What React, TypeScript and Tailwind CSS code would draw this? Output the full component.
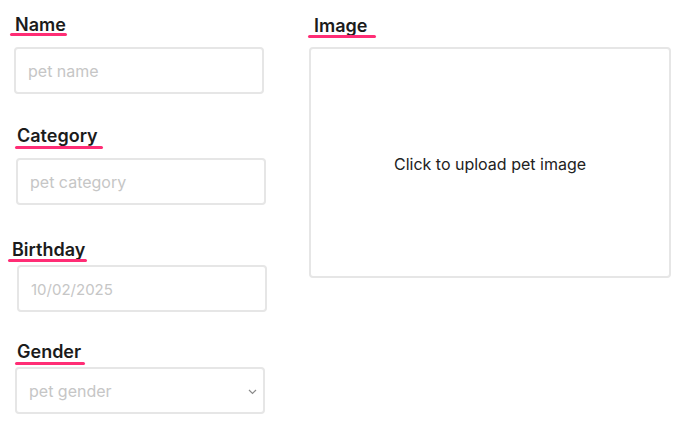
import React from "react";

function Label({ text, cls, lineCls }: { text: string; cls: string; lineCls: string }) {
  return (
    <>
      <div className={"text-[18px] leading-[20px] font-semibold text-[#1b1b1b] " + cls}>{text}</div>
      <div className={"h-[3px] rounded-full bg-[#ff2d75] " + lineCls} />
    </>
  );
}

export default function App() {
  return (
    <div className="w-[687px] h-[445px] bg-white font-['Inter',sans-serif] flex overflow-hidden">
      <div className="w-[300px] flex flex-col">
        <Label text="Name" cls="mt-[15px] ml-[15px]" lineCls="-mt-[2px] ml-[10px] w-[57px]" />
        <input
          placeholder="pet name"
          className="mt-[11px] ml-[14px] w-[250px] h-[47px] border-2 border-[#e6e6e6] rounded-[4px] px-[12px] pt-[1px] text-[16px] text-[#222] placeholder:text-[#c6c6c6] outline-none"
        />

        <Label text="Category" cls="mt-[32px] ml-[17px]" lineCls="mt-0 ml-[15px] w-[88px]" />
        <input
          placeholder="pet category"
          className="mt-[9px] ml-[16px] w-[250px] h-[47px] border-2 border-[#e6e6e6] rounded-[4px] px-[12px] pt-[1px] text-[16px] text-[#222] placeholder:text-[#c6c6c6] outline-none"
        />

        <Label text="Birthday" cls="mt-[35px] ml-[12px]" lineCls="-mt-[1px] ml-[8px] w-[79px]" />
        <input
          placeholder="10/02/2025"
          className="mt-[3px] ml-[17px] w-[250px] h-[47px] border-2 border-[#e6e6e6] rounded-[4px] px-[12px] pt-[1px] text-[15px] text-[#222] placeholder:text-[#c6c6c6] outline-none"
        />

        <Label text="Gender" cls="mt-[30px] ml-[17px]" lineCls="mt-0 ml-[15px] w-[70px]" />
        <div className="relative mt-[2px] ml-[15px] w-[250px] h-[47px] border-2 border-[#e6e6e6] rounded-[4px] flex items-center px-[12px] pt-[1px]">
          <span className="text-[16px] text-[#c6c6c6]">pet gender</span>
          <svg className="absolute right-[6px] top-[20px]" width="9" height="6" viewBox="0 0 9 6" fill="none">
            <path d="M1 1l3.5 3.5L8 1" stroke="#8a8a8a" strokeWidth="1.2" />
          </svg>
        </div>
      </div>

      <div className="flex flex-col">
        <Label text="Image" cls="mt-[16px] ml-[14px] font-medium" lineCls="-mt-[1px] ml-[8px] w-[68px]" />
        <div className="mt-[9px] ml-[9px] w-[362px] h-[231px] border-2 border-[#e6e6e6] rounded-[4px] flex items-center justify-center">
          <span className="text-[16px] text-[#222] pt-[2px]">Click to upload pet image</span>
        </div>
      </div>
    </div>
  );
}
